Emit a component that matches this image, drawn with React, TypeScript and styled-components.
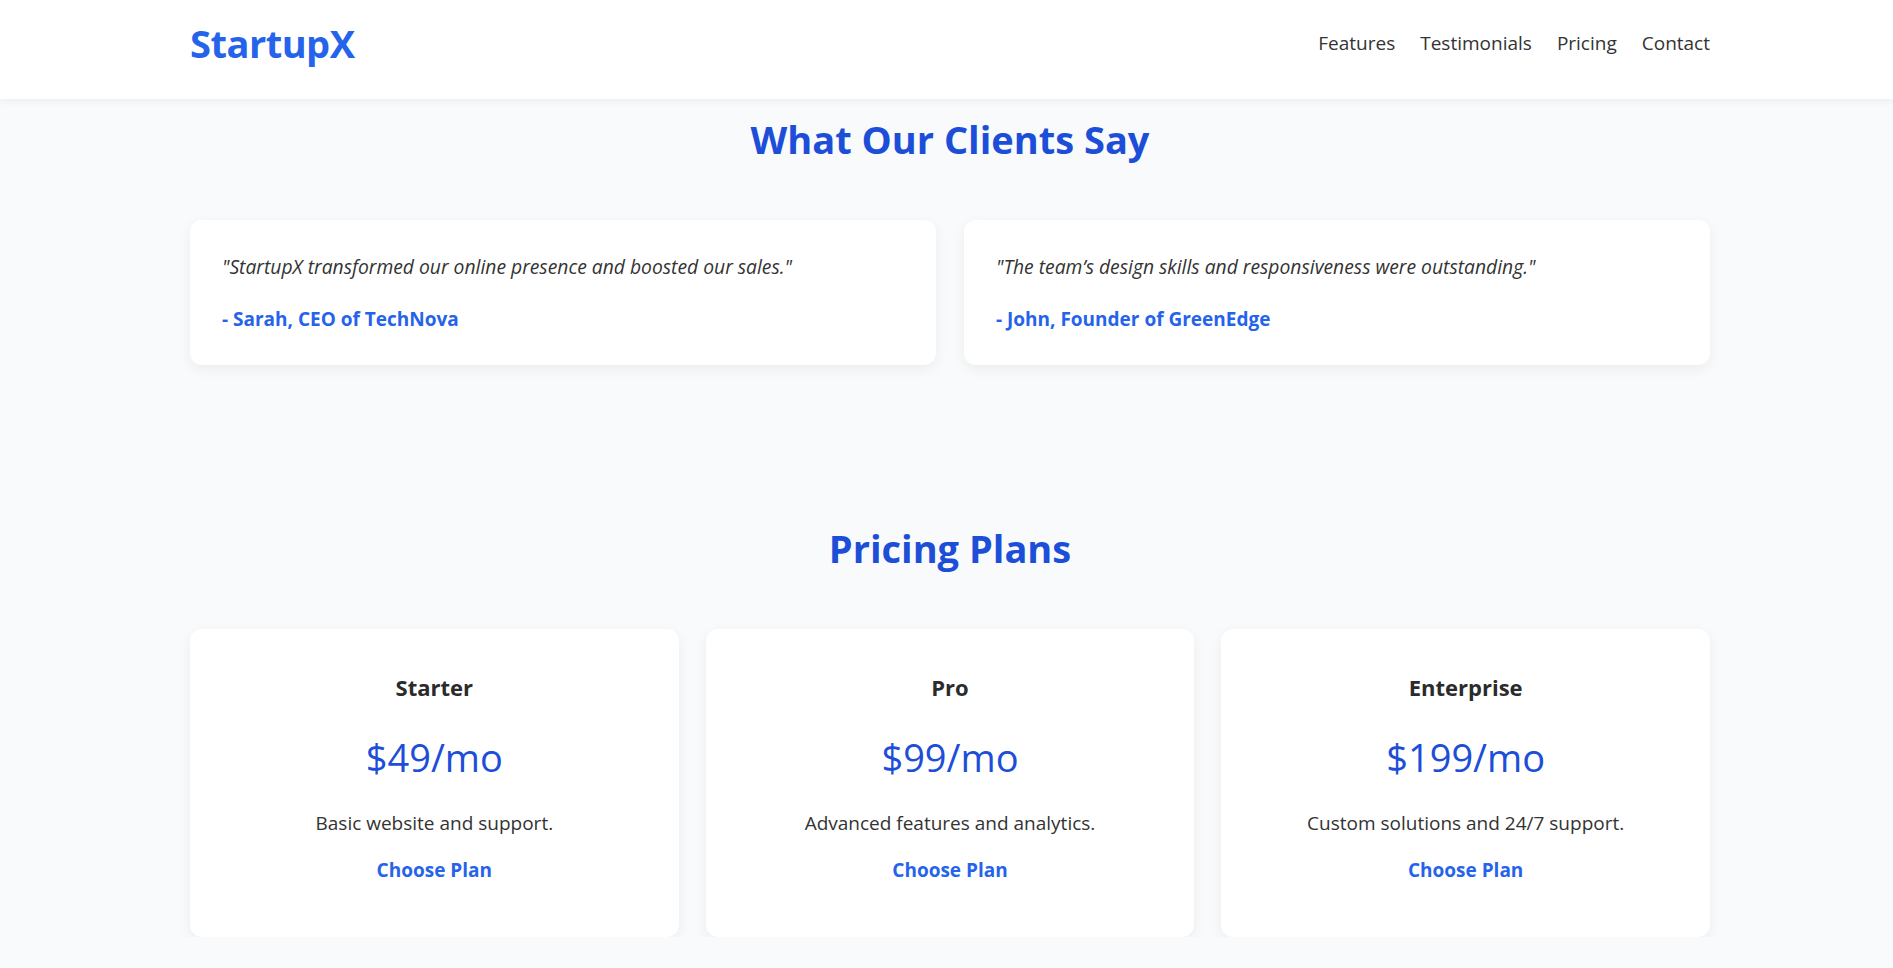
import React from "react";
import styled, { createGlobalStyle } from "styled-components";

const GlobalStyle = createGlobalStyle`
  * { box-sizing: border-box; }
  html, body { margin: 0; padding: 0; }
  body {
    background: #f9fafb;
    color: #333333;
    font-family: "Open Sans", "Noto Sans", sans-serif;
  }
`;

const Header = styled.header`
  height: 99px;
  background: #ffffff;
  box-shadow: 0 2px 8px rgba(0, 0, 0, 0.06);
  position: relative;
  z-index: 2;
`;

const Container = styled.div`
  width: 1520px;
  margin-left: 190px;
`;

const HeaderInner = styled(Container)`
  height: 100%;
  padding-bottom: 14px;
  display: flex;
  align-items: center;
  justify-content: space-between;
`;

const Logo = styled.div`
  font-size: 38px;
  font-weight: 700;
  color: #2563eb;
  letter-spacing: -0.5px;
`;

const Nav = styled.nav`
  display: flex;
  gap: 25px;
`;

const NavLink = styled.a`
  font-size: 19px;
  font-weight: 500;
  color: #333333;
  text-decoration: none;
`;

const Section = styled(Container)<{ $top: number }>`
  padding-top: ${(p) => p.$top}px;
`;

const SectionTitle = styled.h2`
  margin: 0 0 57px;
  text-align: center;
  font-size: 38px;
  line-height: 48px;
  font-weight: 700;
  color: #1d4ed8;
`;

const TwoCol = styled.div`
  display: grid;
  grid-template-columns: 1fr 1fr;
  gap: 28px;
`;

const ThreeCol = styled.div`
  display: grid;
  grid-template-columns: repeat(3, 1fr);
  gap: 27px;
`;

const Card = styled.div`
  background: #ffffff;
  border-radius: 12px;
  box-shadow: 0 4px 14px rgba(0, 0, 0, 0.06);
`;

const TestimonialCard = styled(Card)`
  height: 145px;
  padding: 32px 32px;
`;

const Quote = styled.p`
  margin: 0 0 22px;
  font-size: 19.3px;
  line-height: 30px;
  font-style: italic;
  color: #333333;
`;

const Author = styled.p`
  margin: 0;
  font-size: 19px;
  line-height: 30px;
  font-weight: 700;
  color: #2563eb;
`;

const PlanCard = styled(Card)`
  height: 308px;
  padding: 43px 32px 0;
  display: flex;
  flex-direction: column;
  align-items: center;
`;

const PlanName = styled.h3`
  margin: 0;
  font-size: 22px;
  line-height: 30px;
  font-weight: 700;
  color: #2b2b2b;
`;

const Price = styled.div`
  margin-top: 30px;
  font-size: 38px;
  line-height: 50px;
  font-weight: 400;
  color: #1d4ed8;
`;

const PlanDesc = styled.p`
  margin: 26px 0 0;
  font-size: 19px;
  line-height: 30px;
  color: #333333;
`;

const ChooseButton = styled.button`
  margin-top: 7px;
  padding: 10px 20px;
  border: none;
  background: transparent;
  font-family: inherit;
  font-size: 19px;
  line-height: 30px;
  font-weight: 700;
  color: #2563eb;
  cursor: pointer;
`;

const testimonials = [
  {
    quote: '"StartupX transformed our online presence and boosted our sales."',
    author: "- Sarah, CEO of TechNova",
  },
  {
    quote: '"The team\u2019s design skills and responsiveness were outstanding."',
    author: "- John, Founder of GreenEdge",
  },
];

const plans = [
  { name: "Starter", price: "$49/mo", desc: "Basic website and support." },
  { name: "Pro", price: "$99/mo", desc: "Advanced features and analytics." },
  { name: "Enterprise", price: "$199/mo", desc: "Custom solutions and 24/7 support." },
];

export default function App() {
  return (
    <>
      <GlobalStyle />
      <Header>
        <HeaderInner>
          <Logo>StartupX</Logo>
          <Nav>
            <NavLink href="#features">Features</NavLink>
            <NavLink href="#testimonials">Testimonials</NavLink>
            <NavLink href="#pricing">Pricing</NavLink>
            <NavLink href="#contact">Contact</NavLink>
          </Nav>
        </HeaderInner>
      </Header>
      <Section $top={16}>
        <SectionTitle>What Our Clients Say</SectionTitle>
        <TwoCol>
          {testimonials.map((t) => (
            <TestimonialCard key={t.author}>
              <Quote>{t.quote}</Quote>
              <Author>{t.author}</Author>
            </TestimonialCard>
          ))}
        </TwoCol>
      </Section>
      <Section $top={159}>
        <SectionTitle>Pricing Plans</SectionTitle>
        <ThreeCol>
          {plans.map((p) => (
            <PlanCard key={p.name}>
              <PlanName>{p.name}</PlanName>
              <Price>{p.price}</Price>
              <PlanDesc>{p.desc}</PlanDesc>
              <ChooseButton>Choose Plan</ChooseButton>
            </PlanCard>
          ))}
        </ThreeCol>
      </Section>
    </>
  );
}
